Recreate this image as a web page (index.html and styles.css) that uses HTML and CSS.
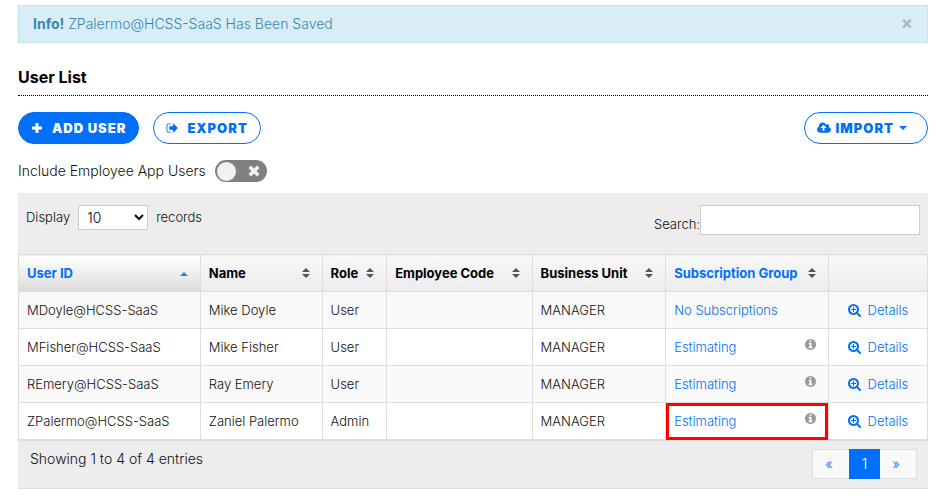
FILE: index.html
```html
<!DOCTYPE html>
<html lang="en">
<head>
    <meta charset="UTF-8">
    <meta name="viewport" content="width=device-width, initial-scale=1.0">
    <title>User List</title>
    <link rel="stylesheet" href="styles.css">
</head>
<body>
    <!-- Shared icons -->
    <svg class="sprite" aria-hidden="true">
        <symbol id="icon-plus" viewBox="0 0 12 12"><path d="M4.500 1h3v3.500H11v3H7.500V11h-3V7.500H1v-3h3.500z"/></symbol>
        <symbol id="icon-times" viewBox="0 0 12 12"><path d="M3 .500l3 3 3-3L11.500 3l-3 3 3 3L9 11.500l-3-3-3 3L.500 9l3-3-3-3z"/></symbol>
        <symbol id="icon-export" viewBox="0 128 1664 1536"><path d="M704 1440q0 4 1 20t.5 26.500-3 23.500-10 19.500-20.500 6.500h-320q-119 0-203.500-84.500t-84.500-203.500v-704q0-119 84.500-203.500t203.500-84.500h320q13 0 22.500 9.500t9.500 22.500q0 4 1 20t.5 26.500-3 23.500-10 19.500-20.500 6.500h-320q-66 0-113 47t-47 113v704q0 66 47 113t113 47h312l11.500 1 11.500 3 8 5.500 7 9 2 13.500zm928-544q0 26-19 45l-544 544q-19 19-45 19t-45-19-19-45v-288h-448q-26 0-45-19t-19-45v-384q0-26 19-45t45-19h448v-288q0-26 19-45t45-19 45 19l544 544q19 19 19 45z"/></symbol>
        <symbol id="icon-cloud" viewBox="-64 128 1920 1536"><path d="M1216 864q0-14-9-23l-352-352q-9-9-23-9t-23 9l-351 351q-10 12-10 24 0 14 9 23t23 9h224v352q0 13 9.500 22.500t22.500 9.500h192q13 0 22.500-9.500t9.500-22.500v-352h224q13 0 22.500-9.500t9.500-22.500zm640 288q0 159-112.500 271.500t-271.500 112.500h-1088q-185 0-316.500-131.500t-131.500-316.500q0-130 70-240t188-165q-2-30-2-43 0-212 150-362t362-150q156 0 285.500 87t188.500 231q71-62 166-62 106 0 181 75t75 181q0 76-41 138 130 31 213.500 135.500t83.500 238.500z"/></symbol>
        <symbol id="icon-info" viewBox="128 128 1536 1536"><path d="M1152 1376v-160q0-14-9-23t-23-9h-96v-512q0-14-9-23t-23-9h-320q-14 0-23 9t-9 23v160q0 14 9 23t23 9h96v320h-96q-14 0-23 9t-9 23v160q0 14 9 23t23 9h448q14 0 23-9t9-23zm-128-896v-160q0-14-9-23t-23-9h-192q-14 0-23 9t-9 23v160q0 14 9 23t23 9h192q14 0 23-9t9-23zm640 416q0 209-103 385.500t-279.500 279.500-385.500 103-385.500-103-279.500-279.500-103-385.500 103-385.500 279.500-279.500 385.500-103 385.500 103 279.500 279.500 103 385.500z"/></symbol>
        <symbol id="icon-zoom" viewBox="64 128 1664 1664"><path d="M1088 800v64q0 13-9.500 22.500t-22.500 9.500h-224v224q0 13-9.500 22.500t-22.500 9.500h-64q-13 0-22.500-9.500t-9.500-22.500v-224h-224q-13 0-22.500-9.500t-9.500-22.500v-64q0-13 9.500-22.500t22.500-9.500h224v-224q0-13 9.500-22.500t22.500-9.500h64q13 0 22.500 9.500t9.500 22.500v224h224q13 0 22.500 9.500t9.500 22.500zm128 32q0-185-131.500-316.500t-316.500-131.500-316.500 131.500-131.500 316.500 131.500 316.500 316.500 131.500 316.500-131.500 131.500-316.500zm512 832q0 53-37.500 90.500t-90.500 37.500q-54 0-90-38l-343-342q-179 124-399 124-143 0-273.500-55.500t-225-150-150-225-55.500-273.500 55.500-273.500 150-225 225-150 273.500-55.500 273.500 55.500 225 150 150 225 55.500 273.500q0 220-124 399l343 343q37 37 37 90z"/></symbol>
        <symbol id="icon-sort" viewBox="0 0 8 10"><path d="M4 0l4 4H0zM0 6h8l-4 4z"/></symbol>
        <symbol id="icon-up" viewBox="0 0 8 10"><path d="M4 4l4 4H0z"/></symbol>
        <symbol id="icon-down" viewBox="0 0 8 4"><path d="M0 0h8L4 4z"/></symbol>
    </svg>

    <div class="container">
        <div class="alert" role="alert">
            <span><strong>Info!</strong> ZPalermo@HCSS-SaaS Has Been Saved</span>
            <button type="button" class="alert-close" aria-label="Close">×</button>
        </div>

        <h1 class="page-title">User List</h1>

        <div class="toolbar">
            <button type="button" class="btn btn-primary"><svg class="btn-icon"><use href="#icon-plus"/></svg>ADD USER</button>
            <button type="button" class="btn btn-export"><svg class="btn-icon"><use href="#icon-export"/></svg>EXPORT</button>
            <button type="button" class="btn btn-import"><svg class="btn-icon cloud"><use href="#icon-cloud"/></svg>IMPORT<svg class="caret"><use href="#icon-down"/></svg></button>
        </div>

        <div class="filter">
            <label for="app-users">Include Employee App Users</label>
            <span class="switch">
                <input type="checkbox" id="app-users">
                <svg class="switch-icon"><use href="#icon-times"/></svg>
            </span>
        </div>

        <div class="panel">
            <div class="panel-head">
                <div class="records">
                    <label for="page-size">Display</label>
                    <select id="page-size">
                        <option selected>10</option>
                        <option>25</option>
                        <option>50</option>
                    </select>
                    <span>records</span>
                </div>
                <div class="search">
                    <label for="search">Search:</label>
                    <input type="text" id="search">
                </div>
            </div>

            <table class="users">
                <colgroup>
                    <col class="col-id">
                    <col class="col-name">
                    <col class="col-role">
                    <col class="col-code">
                    <col class="col-unit">
                    <col class="col-group">
                    <col class="col-details">
                </colgroup>
                <thead>
                    <tr>
                        <th class="sorted"><div class="head">User ID<svg class="sort"><use href="#icon-up"/></svg></div></th>
                        <th><div class="head">Name<svg class="sort"><use href="#icon-sort"/></svg></div></th>
                        <th><div class="head">Role<svg class="sort"><use href="#icon-sort"/></svg></div></th>
                        <th><div class="head">Employee Code<svg class="sort"><use href="#icon-sort"/></svg></div></th>
                        <th><div class="head">Business Unit<svg class="sort"><use href="#icon-sort"/></svg></div></th>
                        <th><div class="head"><a href="#">Subscription Group</a><svg class="sort"><use href="#icon-sort"/></svg></div></th>
                        <th></th>
                    </tr>
                </thead>
                <tbody>
                    <tr>
                        <td>MDoyle@HCSS-SaaS</td>
                        <td>Mike Doyle</td>
                        <td>User</td>
                        <td></td>
                        <td>MANAGER</td>
                        <td><a href="#">No Subscriptions</a></td>
                        <td><a href="#" class="details"><svg class="zoom"><use href="#icon-zoom"/></svg>Details</a></td>
                    </tr>
                    <tr>
                        <td>MFisher@HCSS-SaaS</td>
                        <td>Mike Fisher</td>
                        <td>User</td>
                        <td></td>
                        <td>MANAGER</td>
                        <td><div class="group"><a href="#">Estimating</a><svg class="info"><use href="#icon-info"/></svg></div></td>
                        <td><a href="#" class="details"><svg class="zoom"><use href="#icon-zoom"/></svg>Details</a></td>
                    </tr>
                    <tr>
                        <td>REmery@HCSS-SaaS</td>
                        <td>Ray Emery</td>
                        <td>User</td>
                        <td></td>
                        <td>MANAGER</td>
                        <td><div class="group"><a href="#">Estimating</a><svg class="info"><use href="#icon-info"/></svg></div></td>
                        <td><a href="#" class="details"><svg class="zoom"><use href="#icon-zoom"/></svg>Details</a></td>
                    </tr>
                    <tr>
                        <td>ZPalermo@HCSS-SaaS</td>
                        <td>Zaniel Palermo</td>
                        <td>Admin</td>
                        <td></td>
                        <td>MANAGER</td>
                        <td class="highlight"><div class="group"><a href="#">Estimating</a><svg class="info"><use href="#icon-info"/></svg></div></td>
                        <td><a href="#" class="details"><svg class="zoom"><use href="#icon-zoom"/></svg>Details</a></td>
                    </tr>
                </tbody>
            </table>

            <div class="panel-foot">
                <span>Showing 1 to 4 of 4 entries</span>
                <nav class="pager">
                    <a href="#">«</a>
                    <a href="#" class="active">1</a>
                    <a href="#">»</a>
                </nav>
            </div>
        </div>
    </div>
</body>
</html>
```

FILE: styles.css
```css
* {
    box-sizing: border-box;
}

body {
    margin: 0;
    font-family: Inter, "Liberation Sans", sans-serif;
    font-size: 14px;
    font-weight: 300;
    line-height: 20px;
    color: #111;
    background: #fff;
}

a {
    color: #0070fa;
    text-decoration: none;
}

svg {
    fill: currentColor;
    flex: none;
}

.sprite {
    display: none;
}

.container {
    padding: 5px 17px 0 18px;
}

.alert {
    display: flex;
    align-items: center;
    justify-content: space-between;
    height: 38px;
    padding: 0 14px;
    border: 1px solid #bce8f1;
    background: #d9edf7;
    color: #3a87ad;
}

.alert strong {
    font-weight: 700;
}

.alert-close {
    padding: 0 0 2px;
    border: 0;
    background: none;
    color: #a9b9c1;
    font: bold 18px/20px Inter, sans-serif;
}

.page-title {
    margin: 24px 0 16px;
    padding-bottom: 8px;
    border-bottom: 1px dotted #000;
    font-size: 16px;
    font-weight: 700;
    line-height: 20px;
    color: #000;
}

.toolbar {
    display: flex;
    gap: 14px;
}

.btn {
    display: flex;
    align-items: center;
    height: 32px;
    padding: 0 12px;
    border: 1px solid #0070fa;
    border-radius: 16px;
    background: #fff;
    color: #0070fa;
    font: 900 13px/20px Inter, sans-serif;
    letter-spacing: 1px;
}

.btn-primary {
    background: #0070fa;
    color: #fff;
}

.btn-icon {
    width: 12px;
    height: 12px;
    margin-right: 9px;
}

.btn-icon.cloud {
    width: 14px;
    margin-right: 5px;
}

.btn-import {
    margin-left: auto;
    padding-right: 20px;
}

.caret {
    width: 8px;
    height: 4px;
    margin-left: 5px;
}

.filter {
    display: flex;
    align-items: center;
    gap: 9px;
    margin: 16px 0 11px;
}

.switch {
    display: flex;
    align-items: center;
    justify-content: space-between;
    width: 52px;
    height: 22px;
    padding: 0 7px 0 2px;
    border-radius: 11px;
    background: #808080;
    color: #f1f1f1;
}

.switch input {
    appearance: none;
    width: 19px;
    height: 19px;
    margin: 0;
    border-radius: 50%;
    background: #f1f1f1;
}

.switch-icon {
    width: 12px;
    height: 12px;
}

.panel {
    border-bottom: 1px solid #ddd;
    background: #ededed;
    font-size: 13px;
}

.panel-head {
    display: flex;
    justify-content: space-between;
    height: 61px;
    padding: 12px 8px 0;
}

.records {
    display: flex;
    align-items: flex-start;
    gap: 8px;
    line-height: 24px;
}

.records select {
    width: 70px;
    height: 25px;
    padding: 0 4px;
    border: 1px solid #ccc;
    border-radius: 0;
    background: #fff;
    color: #000;
    font: 300 14px/20px Inter, sans-serif;
}

.search {
    display: flex;
    align-items: flex-start;
    line-height: 38px;
}

.search input {
    width: 220px;
    height: 30px;
    border: 1px solid #ccc;
    background: #fff;
}

.users {
    width: 100%;
    border-collapse: collapse;
    table-layout: fixed;
    background: #fff;
}

.col-id { width: 20%; }
.col-name { width: 13.4%; }
.col-role { width: 7.1%; }
.col-code { width: 16%; }
.col-unit { width: 14.7%; }
.col-group { width: 17.9%; }
.col-details { width: 10.9%; }

.users th,
.users td {
    height: 37px;
    padding: 0 8px;
    border: 1px solid #ddd;
    text-align: left;
    white-space: nowrap;
}

.users th {
    background: linear-gradient(#f8f8f8, #ececec);
    color: #000;
    font-weight: 700;
}

.users th.sorted {
    background: linear-gradient(#fff, #dcdcdc);
    color: #0070fa;
}

.users tbody tr:nth-child(odd) {
    background: #f9f9f9;
}

.users td.highlight {
    outline: 3px solid #f00;
    outline-offset: -3px;
}

.head,
.group {
    display: flex;
    align-items: center;
    justify-content: space-between;
}

.sort {
    width: 8px;
    height: 10px;
    margin-right: 4px;
    color: #555;
}

.sorted .sort {
    color: #2f7fd6;
}

.info {
    width: 11px;
    height: 11px;
    margin: 0 4px 6px 0;
    color: #999;
}

.details {
    display: flex;
    align-items: center;
    justify-content: center;
    gap: 7px;
}

.zoom {
    width: 13px;
    height: 13px;
}

.panel-foot {
    display: flex;
    justify-content: space-between;
    height: 48px;
    padding: 8px 11px 0 12px;
    border-top: 1px solid #ddd;
    font-size: 14px;
}

.pager {
    display: flex;
    height: 30px;
    border: 1px solid #ddd;
    background: #f9f9f9;
    line-height: 28px;
    text-align: center;
}

.pager a {
    width: 36px;
    padding-right: 4px;
}

.pager .active {
    width: 31px;
    height: 30px;
    margin-top: -1px;
    padding: 0;
    background: #0070fa;
    color: #fff;
    line-height: 30px;
}
```
